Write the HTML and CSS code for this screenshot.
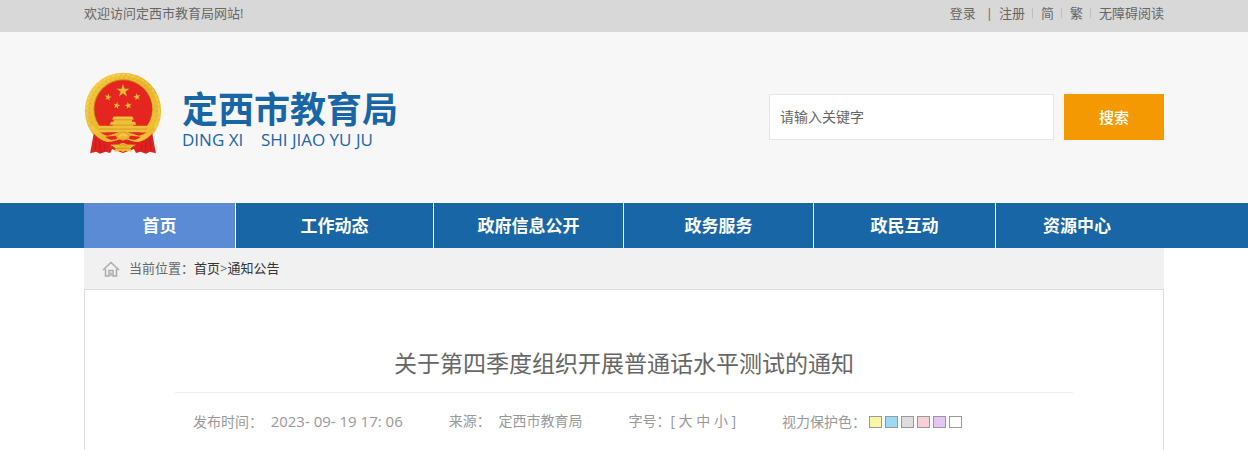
FILE: index.html
```html
<!DOCTYPE html>
<html lang="zh-CN">
<head>
  <meta charset="UTF-8">
  <title>关于第四季度组织开展普通话水平测试的通知</title>
  <link rel="stylesheet" href="styles.css">
</head>
<body>
  <div class="topbar">
    <div class="wrap topbar-inner">
      <span>欢迎访问定西市教育局网站!</span>
      <div class="topbar-links">
        <a href="#">登录</a>
        <span class="bar">|</span>
        <a href="#">注册</a>
        <i class="sep"></i>
        <a href="#">简</a>
        <i class="sep"></i>
        <a href="#">繁</a>
        <i class="sep"></i>
        <a href="#">无障碍阅读</a>
      </div>
    </div>
  </div>

  <header class="header">
    <div class="wrap header-inner">
      <a class="logo" href="#">
        <svg class="emblem" viewBox="32 27 234 250" aria-hidden="true">
          <defs>
            <linearGradient id="gold" x1="0" y1="0" x2="1" y2="1">
              <stop offset="0" stop-color="#f7cf45"/>
              <stop offset="0.5" stop-color="#e9b52c"/>
              <stop offset="1" stop-color="#f5ca3c"/>
            </linearGradient>
            <path id="star" d="M0-20 4.700-6.200H19L7.500 2.400 11.800 16.200 0 7.700-11.800 16.200-7.500 2.400-19-6.200H-4.700z"/>
          </defs>
          <circle cx="149" cy="144" r="115" fill="url(#gold)"/>
          <circle cx="149" cy="144" r="101" fill="none" stroke="#cf931d" stroke-width="5" stroke-dasharray="5 9" opacity=".3"/>
          <circle cx="149" cy="144" r="109" fill="none" stroke="#fbe17b" stroke-width="4" stroke-dasharray="9 6" opacity=".5"/>
          <circle cx="149" cy="138" r="89" fill="#c98b16"/>
          <circle cx="150" cy="139" r="87" fill="#e52520"/>
          <g fill="#efbd36" stroke="#b98218" stroke-width="1">
            <use href="#star" transform="translate(149 84)"/>
            <use href="#star" transform="translate(104 103) rotate(12) scale(.56)"/>
            <use href="#star" transform="translate(191 102) rotate(-12) scale(.56)"/>
            <use href="#star" transform="translate(130 128) rotate(12) scale(.56)"/>
            <use href="#star" transform="translate(165 128) rotate(-12) scale(.56)"/>
          </g>
          <path fill="#f0bf3a" d="M121 161h56l5 9h-6v7h9l4 9h-9v3h45l7 20H68l7-20h43v-3h-9l4-9h8v-7h-5z"/>
          <path fill="none" stroke="#c98a1c" stroke-width="2" d="M118 171h62M112 187h74M76 199h147"/>
          <!-- red drapes behind the lower wreath -->
          <path fill="#df221f" d="M62 206 50 272l18-5 12 6 16-6 14 4 6-12 33 12 33-12 6 12 14-4 16 6 12-6 18 5-12-66-30 6H92z"/>
          <path fill="none" stroke="#b0171a" stroke-width="2" d="M68 226l-3 38M78 236l4 30M92 246l3 18M230 226l3 38M220 236l-4 30M206 246l-3 18"/>
          <path fill="#e52520" d="M75 209h148l-16 16h-40l-18 8-18-8H91z"/>
          <path fill="url(#gold)" d="M57 186c12 18 27 28 46 33l27-8 10-5h20l10 5 27 8c19-5 34-15 46-33l1 18c-13 18-29 29-48 34-15 0-26-4-38-9l-9 5-9-5c-12 5-23 9-38 9-19-5-35-16-48-34z"/>
          <path fill="#e52520" d="M96 222c12-1 22-4 31-3l5 8c-12 7-24 6-36-5zM202 222c-12-1-22-4-31-3l-5 8c12 7 24 6 36-5z"/>
          <path fill="#edb733" stroke="#d39525" stroke-width="2" d="M133 215q16-15 33 0l2 8-9 7h-20l-8-7z"/>
          <path fill="none" stroke="#f8dc6c" stroke-width="3" d="M139 221q11-11 22 0"/>
          <path fill="url(#gold)" d="M110 246l28-1q11-8 22 0l28 1-17 11 5 10-19-3-8 4-8-4-19 3 5-10z"/>
          <path fill="none" stroke="#c98a1c" stroke-width="2" d="M128 257h42M138 249q11-7 22 0"/>
        </svg>
        <span class="logo-text">
          <strong>定西市教育局</strong>
          <small>DING XI &nbsp;&nbsp; SHI JIAO YU JU</small>
        </span>
      </a>
      <form class="search">
        <input type="text" placeholder="请输入关键字" aria-label="请输入关键字">
        <button type="button">搜索</button>
      </form>
    </div>
  </header>

  <nav class="nav">
    <div class="wrap nav-list">
      <a class="active" href="#">首页</a>
      <a href="#">工作动态</a>
      <a href="#">政府信息公开</a>
      <a href="#">政务服务</a>
      <a href="#">政民互动</a>
      <a href="#">资源中心</a>
    </div>
  </nav>

  <main class="wrap main">
    <div class="crumbs">
      <svg class="home" viewBox="0 0 18 16" aria-hidden="true">
        <path d="M1 9 9 1.500 17 9M3.500 8v7H7V9.500h4V15h3.500V8M9 11.500V15"/>
      </svg>
      <span>当前位置：</span>
      <a href="#">首页</a><span>&gt;</span><a href="#">通知公告</a>
    </div>

    <article class="article">
      <h1>关于第四季度组织开展普通话水平测试的通知</h1>
      <div class="meta">
        <span>发布时间： <time>2023- 09- 19 17: 06</time></span>
        <span>来源： <span class="source">定西市教育局</span></span>
        <span>字号：[ <a href="#">大</a> <a href="#">中</a> <a href="#">小</a> ]</span>
        <div class="colors">
          <span>视力保护色：</span>
          <button class="yellow" type="button" aria-label="黄色"></button>
          <button class="blue" type="button" aria-label="蓝色"></button>
          <button class="grey" type="button" aria-label="灰色"></button>
          <button class="pink" type="button" aria-label="粉色"></button>
          <button class="purple" type="button" aria-label="紫色"></button>
          <button class="white" type="button" aria-label="白色"></button>
        </div>
      </div>
    </article>
  </main>
</body>
</html>
```
FILE: styles.css
```css
:root {
  --blue: #1966a7;
  --orange: #f59902;
  --text: #666;
}

* {
  box-sizing: border-box;
}

body {
  display: flex;
  flex-direction: column;
  min-height: 100vh;
  margin: 0;
  font-family: "Open Sans", "Noto Sans CJK SC", sans-serif;
  font-size: 13px;
  color: var(--text);
  background: #fff;
}

a {
  color: inherit;
  text-decoration: none;
}

.wrap {
  width: 100%;
  max-width: 1080px;
  margin: 0 auto;
}

/* top bar */
.topbar {
  background: #d8d8d8;
}

.topbar-inner {
  display: flex;
  justify-content: space-between;
  line-height: 26px;
  padding-bottom: 6px;
}

.topbar-links {
  display: flex;
  align-items: center;
}

.bar {
  margin: 0 6px 0 10px;
}

.sep {
  width: 1px;
  height: 10px;
  margin: 0 8px 0 7px;
  background: #bfbfbf;
}

/* header */
.header {
  background: #f7f7f7;
}

.header-inner {
  display: flex;
  justify-content: space-between;
  align-items: center;
  padding: 40px 0 48px;
}

.logo {
  display: flex;
  align-items: center;
  gap: 20px;
  color: var(--blue);
}

.emblem {
  width: 78px;
  height: 83px;
}

.logo-text {
  padding-top: 12px;
}

.logo-text strong,
.logo-text small {
  display: block;
}

.logo-text strong {
  font-size: 36px;
  line-height: 40px;
}

.logo-text small {
  font-size: 17px;
  line-height: 20px;
}

.search {
  display: flex;
  gap: 10px;
  margin-top: 6px;
}

.search input {
  width: 285px;
  height: 46px;
  padding: 0 10px;
  border: 1px solid #e5e5e5;
  background: #fff;
  font: inherit;
  font-size: 14px;
}

.search input::placeholder {
  color: var(--text);
}

.search button {
  width: 100px;
  border: none;
  background: var(--orange);
  color: #fff;
  font: inherit;
  font-size: 15px;
  font-weight: 500;
  cursor: pointer;
}

/* navigation */
.nav {
  background: var(--blue);
}

.nav-list {
  display: grid;
  grid-template-columns: 152fr 198fr 190fr 190fr 182fr 162fr 6fr;
}

.nav a {
  border-right: 1px solid #fff;
  color: #fff;
  font-size: 17px;
  font-weight: bold;
  line-height: 45px;
  text-align: center;
}

.nav a:last-child {
  border-right: none;
}

.nav .active {
  background: #5b8bd5;
}

/* breadcrumb */
.main {
  display: flex;
  flex: 1;
  flex-direction: column;
}

.crumbs {
  display: flex;
  align-items: center;
  padding-left: 18px;
  background: #f1f1f1;
  line-height: 41px;
}

.crumbs a {
  color: #333;
}

.home {
  width: 18px;
  height: 16px;
  margin-right: 9px;
  fill: none;
  stroke: #aaa;
  stroke-width: 1.5;
}

/* article */
.article {
  flex: 1;
  padding: 54px 90px 0;
  border: 1px solid #dcdcdc;
  border-bottom: none;
}

.article h1 {
  margin: 0;
  padding-bottom: 10px;
  border-bottom: 1px solid #ededed;
  font-size: 23px;
  font-weight: normal;
  line-height: 38px;
  text-align: center;
}

.meta {
  display: flex;
  gap: 46px;
  padding: 17px 18px 0;
  color: #999;
  font-size: 14px;
  line-height: 22px;
}

.meta time {
  margin-left: 4px;
  font-size: 15px;
}

.source {
  margin-left: 4px;
}

.colors {
  display: flex;
  align-items: center;
  gap: 3px;
}

.colors button {
  width: 13px;
  height: 12px;
  padding: 0;
  border: 1px solid #999;
  cursor: pointer;
}

.yellow { background: #faf6a8; }
.blue { background: #9bdaf3; }
.grey { background: #ddd; }
.pink { background: #f9cfd6; }
.purple { background: #e3c6f5; }
.white { background: #fff; }
```
